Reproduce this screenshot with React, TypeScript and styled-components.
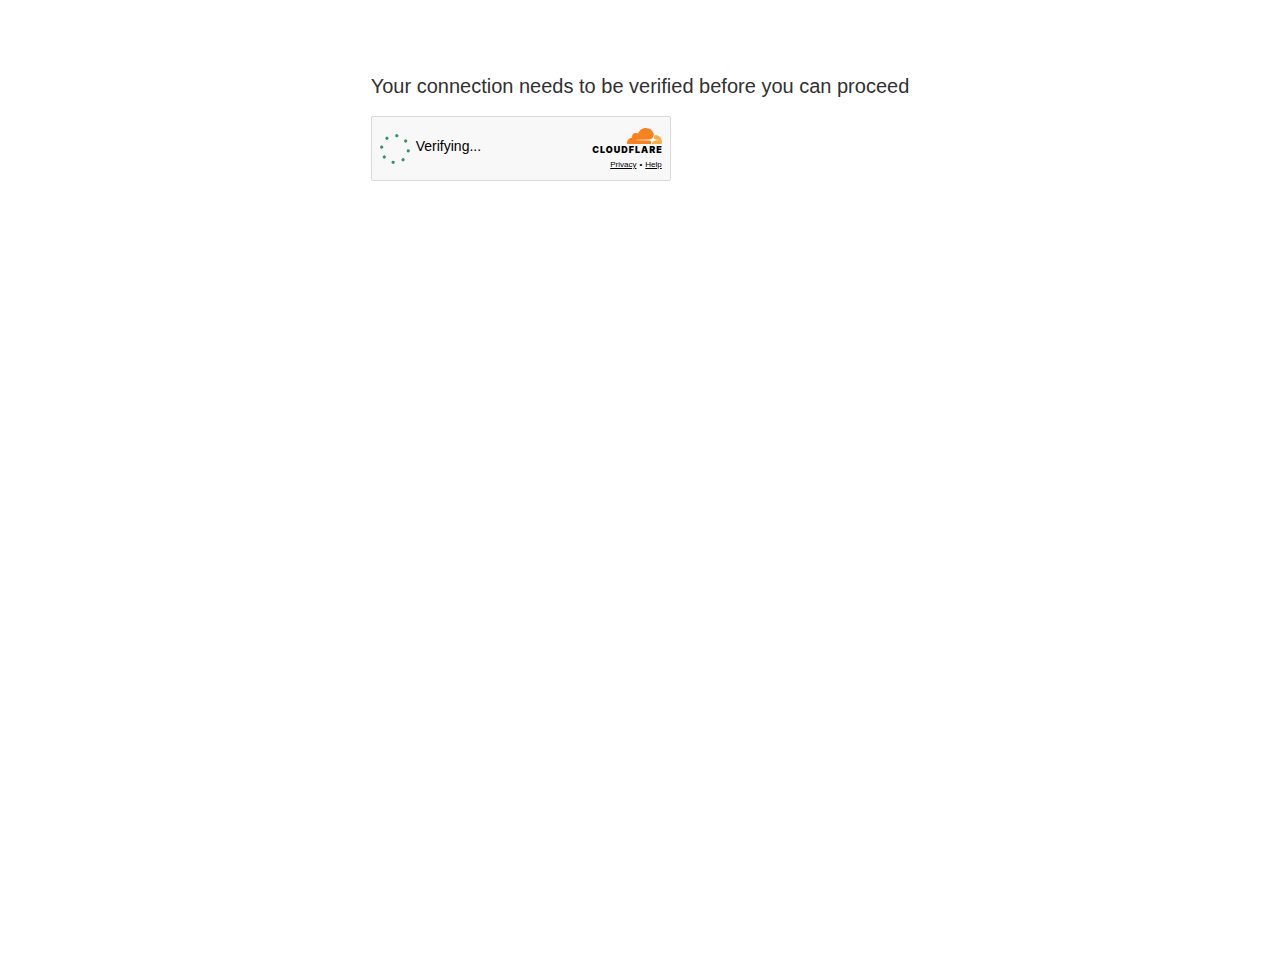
import React from "react";
import styled, { createGlobalStyle } from "styled-components";

const GlobalStyle = createGlobalStyle`
  body {
    margin: 0;
    background: #ffffff;
    color: #313131;
    font-family: "Liberation Sans", Arial, sans-serif;
  }
`;

const Page = styled.main`
  display: flex;
  justify-content: center;
  padding: 72px 16px 32px;
`;

const Content = styled.div`
  display: flex;
  flex-direction: column;
  gap: 16px;
`;

const Title = styled.h1`
  margin: 0;
  font-size: 20px;
  line-height: 28px;
  font-weight: 400;
`;

const Widget = styled.section`
  box-sizing: border-box;
  display: flex;
  justify-content: space-between;
  width: 300px;
  max-width: 100%;
  min-height: 65px;
  padding: 0 8px;
  border: 1px solid #dadada;
  border-radius: 2px;
  background: #f8f8f8;
  color: #000000;
`;

const Status = styled.div`
  display: flex;
  align-items: center;
  gap: 6px;
`;

const Spinner = styled.svg`
  width: 30px;
  height: 30px;
  fill: #2f9468;
`;

const StatusText = styled.span`
  padding-bottom: 5px;
  font-size: 14px;
  line-height: 16px;
`;

const Brand = styled.div`
  display: flex;
  flex-direction: column;
  align-items: flex-end;
  padding-top: 11px;
`;

const Cloud = styled.svg`
  display: block;
  width: 35px;
  height: 17px;
`;

const Wordmark = styled.span`
  margin-right: -1px;
  font-family: Inter, sans-serif;
  font-size: 9px;
  line-height: 10px;
  font-weight: 900;
  letter-spacing: 1px;
`;

const Links = styled.nav`
  display: flex;
  gap: 3px;
  padding-top: 5px;
  font-size: 8px;
  line-height: 10px;
`;

const Link = styled.a`
  color: inherit;
  text-decoration: underline;
`;

const dotAngles = [8, 53, 98, 143, 188, 233, 278, 323];

export default function App() {
  return (
    <>
      <GlobalStyle />
      <Page>
        <Content>
          <Title>Your connection needs to be verified before you can proceed</Title>
          <Widget>
            <Status role="status">
              <Spinner viewBox="0 0 30 30" aria-hidden="true">
                {dotAngles.map((angle) => (
                  <circle key={angle} cx="15" cy="1.6" r="1.6" transform={`rotate(${angle} 15 15)`} />
                ))}
              </Spinner>
              <StatusText>Verifying...</StatusText>
            </Status>
            <Brand>
              <Cloud viewBox="38 0 35 17" aria-hidden="true">
                <path
                  fill="#ffffff"
                  d="M61.8848 15.7841 66.65 6.29 69 9.6 72 12 66 13 62.8 16Z"
                />
                <path
                  fill="#f6821f"
                  d="M61.8848 15.7841L62.0632 15.1578C62.2758 14.4126 62.1967 13.7239 61.8401 13.2178C61.5118 12.7517 60.9649 12.4773 60.3007 12.4453L47.7201 12.2836C47.6811 12.2829 47.6428 12.2728 47.6083 12.2542C47.5738 12.2356 47.5442 12.209 47.5217 12.1766C47.4996 12.1431 47.4856 12.1049 47.4807 12.0649C47.4758 12.025 47.4801 11.9844 47.4933 11.9465C47.5149 11.8839 47.5541 11.8291 47.6061 11.7888C47.658 11.7486 47.7204 11.7247 47.7856 11.7202L60.4827 11.5566C61.9889 11.4864 63.6196 10.2462 64.1905 8.73372L64.9146 6.81361C64.9443 6.73242 64.951 6.64444 64.9341 6.55957C64.112 2.80652 60.8115 0 56.8652 0C53.2293 0 50.1421 2.38158 49.0347 5.69186C48.2864 5.12186 47.3535 4.85982 46.4228 4.95823C44.6785 5.13401 43.276 6.55928 43.1034 8.32979C43.059 8.77189 43.0915 9.21845 43.1992 9.64918C40.3497 9.73347 38.0645 12.1027 38.0645 15.0151C38.0649 15.2751 38.0838 15.5347 38.1212 15.7919C38.1294 15.8513 38.1584 15.9057 38.2029 15.9452C38.2474 15.9847 38.3044 16.0067 38.3635 16.0071L61.5894 16.0099C61.6616 16.0088 61.7252 15.9862 61.7772 15.9455C61.8293 15.9049 61.867 15.8482 61.8848 15.7841Z"
                />
                <path
                  fill="#fbad41"
                  d="M66.0758 6.95285C65.9592 6.95285 65.843 6.95582 65.7274 6.96177C65.6426 6.98437 65.6152 7.00219 65.5931 7.02579C65.5711 7.04939 65.555 7.07806 65.5462 7.10936L65.0515 8.84333C64.8389 9.58847 64.918 10.2766 65.2749 10.7827C65.6029 11.2494 66.1498 11.5233 66.814 11.5552L69.4959 11.7189C69.5336 11.7199 69.5705 11.73 69.6037 11.7483C69.6369 11.7666 69.6654 11.7925 69.687 11.8239C69.7092 11.8576 69.7234 11.896 69.7283 11.9363C69.7332 11.9765 69.7288 12.0173 69.7153 12.0555C69.6937 12.118 69.6546 12.1727 69.6028 12.2129C69.5509 12.2531 69.4887 12.2771 69.4236 12.2819L66.6371 12.4453C65.1241 12.5161 63.4937 13.7558 62.9233 15.2682L62.722 15.8022C62.7136 15.8245 62.7105 15.8486 62.713 15.8724C62.7155 15.8961 62.7236 15.9189 62.7365 15.9389C62.7495 15.9589 62.7669 15.9755 62.7874 15.9873C62.8079 15.9991 62.8309 16.0058 62.8544 16.0068H72.4438C72.4996 16.0071 72.554 15.9893 72.5987 15.9556C72.6433 15.922 72.6757 15.8744 72.6909 15.8205C72.8618 15.2092 72.9484 14.5773 72.9482 13.9432C72.9445 10.0893 69.8705 6.95285 66.0758 6.95285Z"
                />
              </Cloud>
              <Wordmark>CLOUDFLARE</Wordmark>
              <Links aria-label="Cloudflare">
                <Link href="#privacy">Privacy</Link>
                <span aria-hidden="true">•</span>
                <Link href="#help">Help</Link>
              </Links>
            </Brand>
          </Widget>
        </Content>
      </Page>
    </>
  );
}
